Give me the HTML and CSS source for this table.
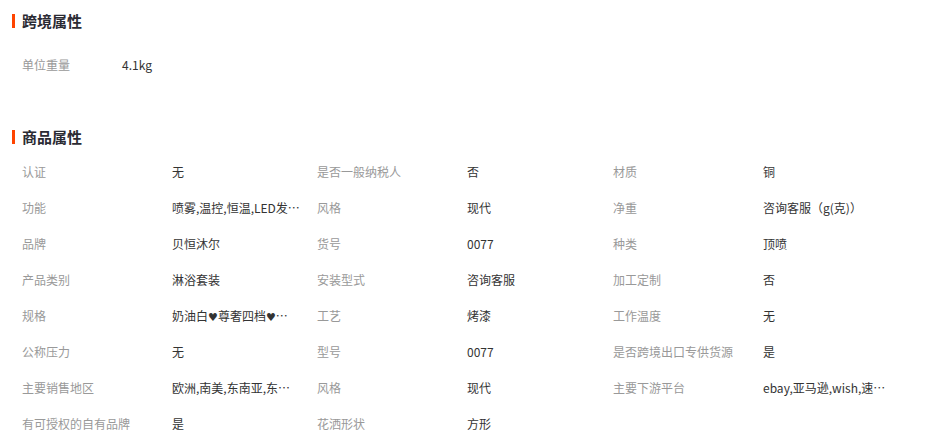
FILE: index.html
```html
<!DOCTYPE html>
<html lang="zh-CN">
<head>
<meta charset="utf-8">
<title>属性</title>
<link rel="stylesheet" href="styles.css">
</head>
<body>
<div class="page">
  <section class="block block-cross">
    <h2 class="title">跨境属性</h2>
    <div class="grid grid-cross">
      <div class="label">单位重量</div><div class="value">4.1kg</div>
    </div>
  </section>
  <section class="block block-goods">
    <h2 class="title">商品属性</h2>
    <div class="grid">
      <div class="label">认证</div><div class="value">无</div>
      <div class="label">是否一般纳税人</div><div class="value">否</div>
      <div class="label">材质</div><div class="value">铜</div>

      <div class="label">功能</div><div class="value">喷雾,温控,恒温,LED发…</div>
      <div class="label">风格</div><div class="value">现代</div>
      <div class="label">净重</div><div class="value">咨询客服（g(克)）</div>

      <div class="label">品牌</div><div class="value">贝恒沐尔</div>
      <div class="label">货号</div><div class="value">0077</div>
      <div class="label">种类</div><div class="value">顶喷</div>

      <div class="label">产品类别</div><div class="value">淋浴套装</div>
      <div class="label">安装型式</div><div class="value">咨询客服</div>
      <div class="label">加工定制</div><div class="value">否</div>

      <div class="label">规格</div><div class="value">奶油白<span class="heart">♥</span>尊奢四档<span class="heart">♥</span>…</div>
      <div class="label">工艺</div><div class="value">烤漆</div>
      <div class="label">工作温度</div><div class="value">无</div>

      <div class="label">公称压力</div><div class="value">无</div>
      <div class="label">型号</div><div class="value">0077</div>
      <div class="label">是否跨境出口专供货源</div><div class="value">是</div>

      <div class="label">主要销售地区</div><div class="value">欧洲,南美,东南亚,东…</div>
      <div class="label">风格</div><div class="value">现代</div>
      <div class="label">主要下游平台</div><div class="value">ebay,亚马逊,wish,速…</div>

      <div class="label">有可授权的自有品牌</div><div class="value">是</div>
      <div class="label">花洒形状</div><div class="value">方形</div>
    </div>
  </section>
</div>
</body>
</html>
```

FILE: styles.css
```css
html, body {
  margin: 0;
  padding: 0;
  background: #fff;
}
body {
  font-family: "Noto Sans CJK SC", "Microsoft YaHei", sans-serif;
  font-size: 12px;
  color: #333;
}
.page {
  padding: 0 0 0 12px;
}
.block-cross {
  padding-top: 11px;
}
.block-goods {
  padding-top: 44px;
}
.title {
  position: relative;
  margin: 0;
  padding-left: 10px;
  height: 20px;
  line-height: 20px;
  font-size: 15px;
  font-weight: bold;
  color: #2b2b33;
}
.title::before {
  content: "";
  position: absolute;
  left: 0;
  top: 3px;
  width: 3px;
  height: 14px;
  background: #ff4400;
}
.grid {
  display: grid;
  grid-template-columns: 150px 145px 150px 146px 150px 145px;
  grid-auto-rows: 36px;
  padding-left: 10px;
  margin-top: 7px;
}
.grid-cross {
  grid-template-columns: 100px 145px;
  margin-top: 16px;
}
.label,
.value {
  line-height: 36px;
  white-space: nowrap;
}
.label {
  color: #999;
}
.value {
  color: #333;
}
.heart {
  font-family: "DejaVu Sans", sans-serif;
  font-size: 11px;
  color: #333;
}
```
